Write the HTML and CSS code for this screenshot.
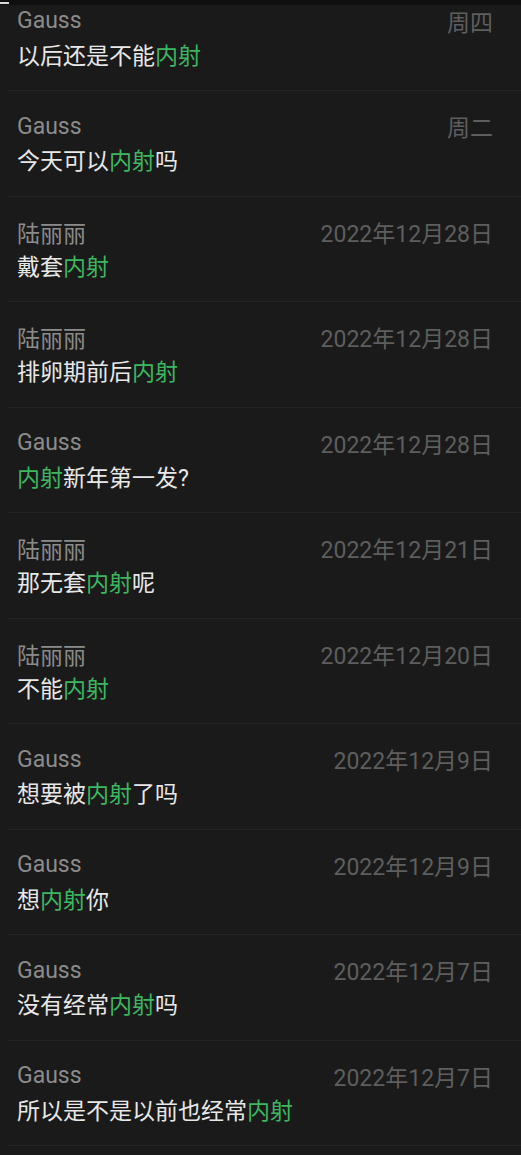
FILE: index.html
```html
<!DOCTYPE html>
<html lang="zh-CN">
<head>
    <meta charset="UTF-8">
    <meta name="viewport" content="width=device-width, initial-scale=1.0">
    <title>聊天记录搜索</title>
    <link rel="stylesheet" href="styles.css">
</head>
<body>
    <div class="topbar"><span class="topbar-mark"></span></div>

    <div class="results">
        <ul class="result-list">
            <li class="result">
                <div class="result-head"><span class="name">Gauss</span><span class="date">周四</span></div>
                <div class="msg">以后还是不能<em>内射</em></div>
            </li>
            <li class="result">
                <div class="result-head"><span class="name">Gauss</span><span class="date">周二</span></div>
                <div class="msg">今天可以<em>内射</em>吗</div>
            </li>
            <li class="result">
                <div class="result-head"><span class="name">陆丽丽</span><span class="date">2022年12月28日</span></div>
                <div class="msg">戴套<em>内射</em></div>
            </li>
            <li class="result">
                <div class="result-head"><span class="name">陆丽丽</span><span class="date">2022年12月28日</span></div>
                <div class="msg">排卵期前后<em>内射</em></div>
            </li>
            <li class="result">
                <div class="result-head"><span class="name">Gauss</span><span class="date">2022年12月28日</span></div>
                <div class="msg"><em>内射</em>新年第一发?</div>
            </li>
            <li class="result">
                <div class="result-head"><span class="name">陆丽丽</span><span class="date">2022年12月21日</span></div>
                <div class="msg">那无套<em>内射</em>呢</div>
            </li>
            <li class="result">
                <div class="result-head"><span class="name">陆丽丽</span><span class="date">2022年12月20日</span></div>
                <div class="msg">不能<em>内射</em></div>
            </li>
            <li class="result">
                <div class="result-head"><span class="name">Gauss</span><span class="date">2022年12月9日</span></div>
                <div class="msg">想要被<em>内射</em>了吗</div>
            </li>
            <li class="result">
                <div class="result-head"><span class="name">Gauss</span><span class="date">2022年12月9日</span></div>
                <div class="msg">想<em>内射</em>你</div>
            </li>
            <li class="result">
                <div class="result-head"><span class="name">Gauss</span><span class="date">2022年12月7日</span></div>
                <div class="msg">没有经常<em>内射</em>吗</div>
            </li>
            <li class="result">
                <div class="result-head"><span class="name">Gauss</span><span class="date">2022年12月7日</span></div>
                <div class="msg">所以是不是以前也经常<em>内射</em></div>
            </li>
        </ul>
    </div>
</body>
</html>
```

FILE: styles.css
```css
html, body {
    margin: 0;
    padding: 0;
    background-color: #1a1a1a;
}
body {
    font-family: Roboto, "Noto Sans CJK SC", sans-serif;
    height: 1155px;
    overflow: hidden;
}
.topbar {
    height: 5px;
    background-color: #0f0f0f;
    position: relative;
    z-index: 1;
}
.topbar-mark {
    display: block;
    width: 9px;
    height: 2px;
    background-color: #d8d8d8;
    position: relative;
    top: 2px;
}
.results {
    overflow: hidden;
}
.result-list {
    list-style: none;
    margin: -19.5px 0 0 0;
    padding: 0;
}
.result {
    height: 105.5px;
    box-sizing: border-box;
    padding: 20px 28px 0 17px;
    border-bottom: 1px solid #242424;
    margin-left: 8px;
    padding-left: 9px;
}
.result-head {
    display: flex;
    justify-content: space-between;
    align-items: center;
    height: 30px;
}
.name {
    font-size: 23px;
    color: #8b8b8b;
}
.date {
    font-size: 23px;
    color: #5e5e5e;
}
.msg {
    font-size: 23px;
    line-height: 42px;
    color: #e8e8e8;
}
.msg em {
    font-style: normal;
    color: #3cb760;
}
```
